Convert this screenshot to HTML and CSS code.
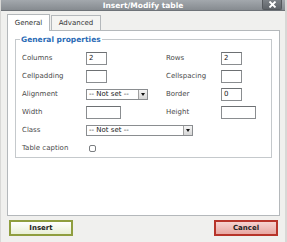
FILE: index.html
```html
<!DOCTYPE html>
<html>
<head>
<meta charset="utf-8">
<link rel="stylesheet" href="styles.css">
</head>
<body>
<div class="dialog">
  <div class="titlebar">
    <span class="title">Insert/Modify table</span>
    <span class="close"><svg width="9" height="7" viewBox="0 0 9 7"><path d="M1.5 0.5 L7.5 6.5 M7.5 0.5 L1.5 6.5" stroke="#fff" stroke-width="1.8"/></svg></span>
  </div>
  <div class="content">
    <div class="tabs">
      <div class="tab active">General</div>
      <div class="tab">Advanced</div>
    </div>
    <div class="panel">
      <fieldset class="fs">
        <legend>General properties</legend>
        <div class="grid">
          <label>Columns</label><div><span class="inp small">2</span></div>
          <label class="r">Rows</label><div><span class="inp small">2</span></div>

          <label>Cellpadding</label><div><span class="inp small"></span></div>
          <label class="r">Cellspacing</label><div><span class="inp small"></span></div>

          <label>Alignment</label><div><span class="sel sel-a"><span class="st">-- Not set --</span><span class="arr"></span></span></div>
          <label class="r">Border</label><div><span class="inp small">0</span></div>

          <label>Width</label><div><span class="inp wide"></span></div>
          <label class="r">Height</label><div><span class="inp wide"></span></div>

          <label>Class</label><div class="span3"><span class="sel sel-c"><span class="st">-- Not set --</span><span class="arr"></span></span></div>

          <label>Table caption</label><div class="span3"><span class="chk"></span></div>
        </div>
      </fieldset>
    </div>
    <div class="buttons">
      <span class="btn insert">Insert</span>
      <span class="btn cancel">Cancel</span>
    </div>
  </div>
</div>
</body>
</html>
```
FILE: styles.css
```css
* { box-sizing: border-box; }
html, body { margin: 0; padding: 0; }
body {
  width: 287px; height: 242px; overflow: hidden;
  font-family: "DejaVu Sans", Verdana, sans-serif;
  font-size: 7px; color: #333;
  background: #f0f0ee;
}
.dialog { width: 287px; height: 242px; display: flex; flex-direction: column;
  border-left: 1px solid #d8d8d6; border-right: 2px solid #d8d8d6; }
.titlebar {
  height: 11px; position: relative;
  background: linear-gradient(#a3a8ad, #868b90);
  border-bottom: 1px solid #6e7378;
  display: flex; align-items: center; justify-content: center;
}
.title { color: #fff; font-weight: bold; font-size: 7.5px; line-height: 11px; }
.close {
  position: absolute; right: 3px; top: 0; width: 20px; height: 10px;
  background: linear-gradient(#7c8186, #5f6469);
  border: 1px solid #55595d; border-top: none; border-radius: 0 0 2px 2px;
  display: flex; align-items: center; justify-content: center;
}
.content { flex: 1; padding: 2px 5px 0 6px; display: flex; flex-direction: column; }
.tabs { display: flex; align-items: flex-end; height: 17px; }
.tab {
  height: 15px; padding: 0 6px; border: 1px solid #b4b8bb; border-bottom: none;
  background: #f4f4f2; line-height: 14px; margin-right: 1px; color: #333; font-size: 7px;
}
.tab.active { height: 17px; width: 43px; text-align: center; background: #fff; position: relative; top: 1px; line-height: 16px; }
.tab:not(.active) { width: 50px; text-align: center; }
.panel {
  height: 186px; background: #fff; border: 1px solid #b4b8bb;
  padding: 4px 7px 0 7px;
}
.fs {
  margin: 0; border: 1px solid #c5c9cc; padding: 4px 0 6px 6px; height: 123px;
}
.fs legend { color: #2b6cb6; font-weight: bold; font-size: 7.5px; padding: 0 1px; margin-left: -2px; }
.grid {
  display: grid; grid-template-columns: 64px 80px 55px 1fr;
  grid-auto-rows: 18px; align-items: center;
  margin-top: 1px;
}
.grid label { color: #4a4a4a; }
.span3 { grid-column: 2 / 5; }
.inp {
  display: block; height: 13px; border: 1px solid #8a8d90; border-top-color: #6d7073;
  background: #fff; font-size: 7px; line-height: 11px; padding-left: 2px; color: #222;
}
.small { width: 21px; }
.wide { width: 35px; }
.sel {
  display: flex; align-items: center; height: 11px; border: 1px solid #8a8d90;
  background: #fff; padding-left: 2px; justify-content: space-between; font-size: 7px; color: #222;
}
.sel-a { width: 62px; }
.sel-c { width: 107px; }
.st { line-height: 9px; }
.arr {
  width: 9px; height: 9px; background: linear-gradient(#f4f4f4, #d6d6d6);
  border-left: 1px solid #a0a0a0; position: relative;
}
.arr::after {
  content: ""; position: absolute; left: 2px; top: 3px;
  border-left: 2px solid transparent; border-right: 2px solid transparent; border-top: 3px solid #111;
}
.chk {
  display: block; width: 7px; height: 7px; margin-left: 3px;
  border: 1px solid #7b7e81; border-radius: 2px; background: #fff;
}
.buttons { display: flex; justify-content: space-between; padding: 4px 2px 0 2px; }
.btn {
  width: 64px; height: 16px; display: flex; align-items: center; justify-content: center;
  font-weight: bold; font-size: 7px; color: #222; border: 2px solid;
}
.insert { border-color: #8f9e3f; background: linear-gradient(#ffffff, #e8efd5); }
.cancel { border-color: #b7342a; background: linear-gradient(#f6d3d0, #e8a7a2); }
```
